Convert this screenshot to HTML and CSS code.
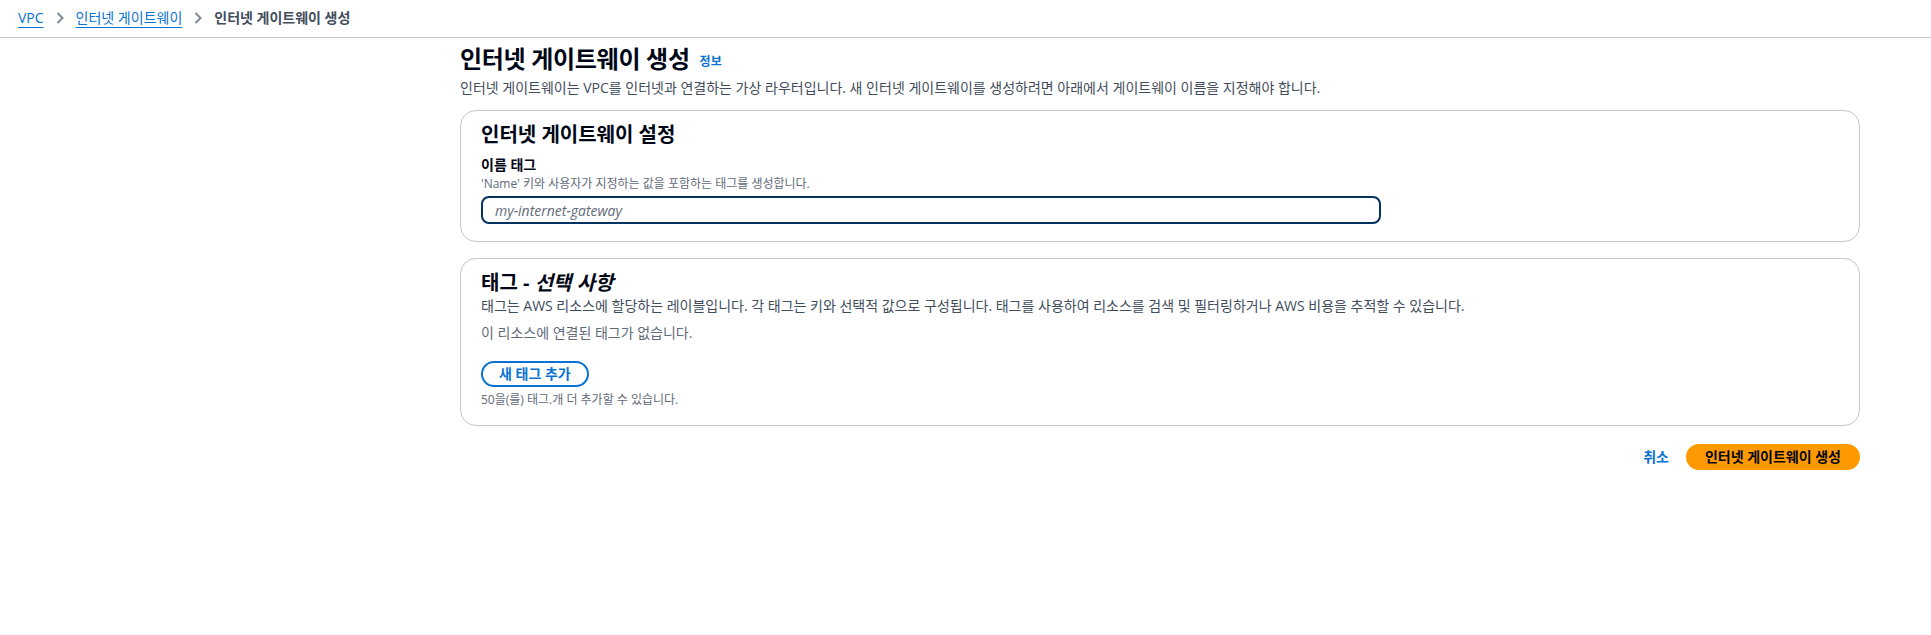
FILE: index.html
```html
<!DOCTYPE html>
<html lang="ko">
<head>
<meta charset="utf-8">
<title>인터넷 게이트웨이 생성</title>
<link rel="stylesheet" href="styles.css">
</head>
<body>
<nav class="breadcrumbs">
  <a class="crumb-link" href="#">VPC</a>
  <svg class="chev" width="10" height="14" viewBox="0 0 10 14"><path d="M2.5 2l5 5-5 5" fill="none" stroke="#7d8998" stroke-width="2"/></svg>
  <a class="crumb-link" href="#">인터넷 게이트웨이</a>
  <svg class="chev" width="10" height="14" viewBox="0 0 10 14"><path d="M2.5 2l5 5-5 5" fill="none" stroke="#7d8998" stroke-width="2"/></svg>
  <span class="crumb-current">인터넷 게이트웨이 생성</span>
</nav>
<main class="page">
  <header class="page-header">
    <h1 class="page-title">인터넷 게이트웨이 생성 <a class="info" href="#">정보</a></h1>
    <p class="page-desc">인터넷 게이트웨이는 VPC를 인터넷과 연결하는 가상 라우터입니다. 새 인터넷 게이트웨이를 생성하려면 아래에서 게이트웨이 이름을 지정해야 합니다.</p>
  </header>

  <section class="card">
    <h2 class="card-title">인터넷 게이트웨이 설정</h2>
    <div class="field">
      <label class="field-label" for="name">이름 태그</label>
      <div class="field-hint">'Name' 키와 사용자가 지정하는 값을 포함하는 태그를 생성합니다.</div>
      <input id="name" class="text-input" type="text" placeholder="my-internet-gateway" autofocus>
    </div>
  </section>

  <section class="card card-tags">
    <h2 class="card-title">태그 - <em>선택 사항</em></h2>
    <p class="card-desc">태그는 AWS 리소스에 할당하는 레이블입니다. 각 태그는 키와 선택적 값으로 구성됩니다. 태그를 사용하여 리소스를 검색 및 필터링하거나 AWS 비용을 추적할 수 있습니다.</p>
    <p class="empty">이 리소스에 연결된 태그가 없습니다.</p>
    <button class="btn-normal" type="button">새 태그 추가</button>
    <p class="limit">50을(를) 태그.개 더 추가할 수 있습니다.</p>
  </section>

  <div class="actions">
    <a class="btn-link" href="#">취소</a>
    <button class="btn-primary" type="button">인터넷 게이트웨이 생성</button>
  </div>
</main>
</body>
</html>
```
FILE: styles.css
```css
* { box-sizing: border-box; }
html, body {
  margin: 0;
  padding: 0;
  background: #ffffff;
  font-family: "Open Sans", "Noto Sans CJK KR", sans-serif;
  color: #000716;
  font-size: 14px;
  line-height: 20px;
}
.breadcrumbs {
  display: flex;
  align-items: center;
  height: 38px;
  padding: 0 0 2px 18px;
  border-bottom: 1px solid #c6c6cd;
}
.crumb-link {
  color: #0972d3;
  text-decoration: underline;
  text-underline-offset: 4px;
  text-decoration-thickness: 1px;
}
.chev { margin: 0 11px; }
.crumb-current {
  color: #414d5c;
  font-weight: 700;
}
.page {
  width: 1400px;
  margin-left: 460px;
  padding-top: 6px;
}
.page-title {
  margin: 0;
  font-size: 24px;
  line-height: 30px;
  font-weight: 700;
  letter-spacing: -0.3px;
}
.info {
  font-size: 12px;
  font-weight: 700;
  color: #0972d3;
  text-decoration: none;
  margin-left: 4px;
  letter-spacing: 0;
  vertical-align: 2px;
}
.page-desc {
  margin: 1px 0 0 0;
  color: #414d5c;
}
.card {
  margin-top: 12px;
  border: 1px solid #c6c6cd;
  border-radius: 16px;
  padding: 12px 20px 17px 20px;
}
.card-title {
  margin: 0;
  font-size: 20px;
  line-height: 24px;
  font-weight: 700;
}
.card-title em { font-style: italic; }
.field { margin-top: 8px; }
.field-label {
  display: block;
  font-weight: 700;
}
.field-hint {
  margin-top: 1px;
  font-size: 12px;
  line-height: 16px;
  color: #5f6b7a;
}
.text-input {
  display: block;
  margin-top: 4px;
  width: 900px;
  height: 28px;
  border: 2px solid #033160;
  border-radius: 8px;
  padding: 0 12px;
  font-family: inherit;
  font-size: 14px;
  color: #000716;
  caret-color: #000716;
  outline: none;
}
.text-input::placeholder {
  color: #5f6b7a;
  font-style: italic;
}
.card-tags {
  margin-top: 16px;
  padding-bottom: 17px;
}
.card-desc {
  margin: 1px 0 0 0;
  color: #414d5c;
}
.empty {
  margin: 7px 0 0 0;
  color: #5f6b7a;
}
.btn-normal {
  display: block;
  margin-top: 18px;
  height: 26px;
  padding: 0 16px;
  border: 2px solid #0972d3;
  border-radius: 20px;
  background: #ffffff;
  color: #0972d3;
  font-family: inherit;
  font-size: 14px;
  line-height: 20px;
  font-weight: 700;
}
.limit {
  margin: 5px 0 0 0;
  font-size: 12px;
  line-height: 16px;
  color: #5f6b7a;
}
.actions {
  display: flex;
  justify-content: flex-end;
  align-items: center;
  margin-top: 18px;
  gap: 17px;
}
.btn-link {
  color: #0972d3;
  font-weight: 700;
  text-decoration: none;
}
.btn-primary {
  height: 26px;
  padding: 0 17px;
  border: 2px solid #ff9900;
  border-radius: 20px;
  background: #ff9900;
  color: #000716;
  font-family: inherit;
  font-size: 14px;
  line-height: 20px;
  font-weight: 700;
}
```
